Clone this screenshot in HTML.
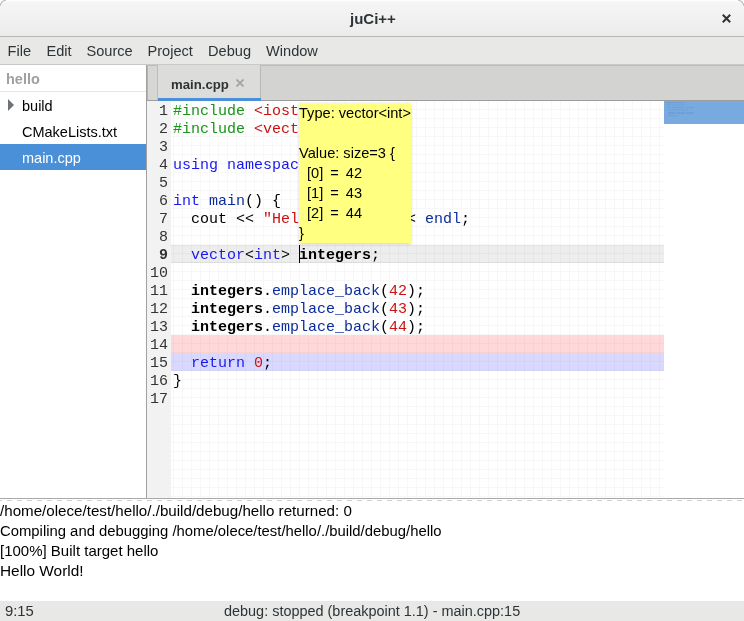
<!DOCTYPE html>
<html><head><meta charset="utf-8">
<style>
*{box-sizing:border-box;margin:0;padding:0}
html,body{width:744px;height:621px;overflow:hidden;will-change:transform;background:#fff;font-family:"Liberation Sans",sans-serif;color:#2e3436}
.abs{position:absolute}
#title{left:0;top:0;width:744px;height:37px;background:linear-gradient(#fdfdfd 0,#fdfdfd 1px,#f5f5f5 2px,#ececec);border-bottom:1px solid #b6b6b3}
#title .t{left:350px;top:10px;font-weight:bold;font-size:15px;color:#2e3436;white-space:pre}
#menu{left:0;top:37px;width:744px;height:28px;background:#e8e8e7;border-bottom:1px solid #c9c9c6}
#menu span{position:absolute;top:6px;font-size:14.6px;color:#2e3436;white-space:pre}
#side{left:0;top:65px;width:146px;height:433px;background:#fff}
#side .row{position:absolute;left:0;width:146px;height:26px;font-size:14.5px;white-space:pre}
#vsep{left:146px;top:65px;width:1px;height:433px;background:#a1a1a1}
#nbhead{left:147px;top:65px;width:597px;height:36px;background:#d3d3d1;border-bottom:1px solid #9d9d9b;border-top:1px solid #bdbdbb}
#nbleft{left:147px;top:66px;width:11px;height:34px;background:#d6d6d4;border-left:1px solid #b3b3b1;border-right:1px solid #bdbdbb}
#tab{left:158px;top:65px;width:103px;height:35px;background:#dcdcda;border-right:1px solid #b9b9b7}
#tabline{left:158px;top:98px;width:103px;height:3px;background:#4a90d9}
#editor{left:147px;top:101px;width:597px;height:397px;background:#fff}
#gutter{left:147px;top:101px;width:24px;height:397px;background:#f2f2f2}
#grid{left:171px;top:101px;width:493px;height:397px;
 background-image:linear-gradient(90deg,#f7f7f7 1px,transparent 1px),linear-gradient(#f7f7f7 1px,transparent 1px);
 background-size:9px 9px;background-position:2px 8px}
.code{font-family:"Liberation Mono",monospace;font-size:15px;line-height:18px;white-space:pre;color:#000}
#lnums{left:147px;top:103px;width:21px;text-align:right;color:#333}
#src{left:173px;top:103px}
.ln{height:18px}
.g{color:#189518}.r{color:#cc1010}.b{color:#1818ee}.bb{color:#0d2c9c}.k{color:#000}
#mini{left:664px;top:101px;width:80px;height:23px;background:#78aae0}
#tip{left:299px;top:103px;width:112px;height:140px;background:#ffff80;box-shadow:0 1px 3px rgba(0,0,0,0.18);font-size:14.6px;line-height:20px;color:#000;white-space:pre}
#tip .ti{padding-left:8px;word-spacing:3px}
#hsep{left:0;top:498px;width:744px;height:1px;background:#a8a8a8}
#dash{left:0;top:500px;width:744px;height:1px;background-image:linear-gradient(90deg,#d0d0d0 5px,transparent 5px);background-size:10px 1px;background-position:7px 0}
#term{left:0;top:501px;font-size:15px;line-height:20px;color:#000;white-space:pre}
#status{left:0;top:601px;width:744px;height:20px;background:#e8e8e7;font-size:14px;color:#2e3436;white-space:pre}
</style></head><body>
<div id="title" class="abs"><span class="t abs">juCi++</span>
<svg class="abs" style="left:721px;top:13px" width="11" height="11" viewBox="0 0 11 11"><path d="M1.8 1.8L9.2 9.2M9.2 1.8L1.8 9.2" stroke="#2e3436" stroke-width="2" stroke-linecap="butt"/></svg>
</div>
<div id="menu" class="abs">
<span style="left:7.5px">File</span><span style="left:46.5px">Edit</span><span style="left:86.5px">Source</span><span style="left:147.5px">Project</span><span style="left:208px">Debug</span><span style="left:266px">Window</span>
</div>
<div id="side" class="abs">
<div class="row" style="top:0;color:#a0a0a0;font-weight:bold"><span class="abs" style="left:6px;top:6px">hello</span></div>
<div class="abs" style="left:0;top:26px;width:146px;height:1px;background:#e6e6e6"></div>
<div class="row" style="top:27px;color:#000"><svg class="abs" style="left:8px;top:7px" width="6" height="12"><path d="M0 0L6 6L0 12Z" fill="#6e7378"/></svg><span class="abs" style="left:22px;top:6px">build</span></div>
<div class="row" style="top:53px;color:#000"><span class="abs" style="left:22px;top:6px">CMakeLists.txt</span></div>
<div class="row" style="top:79px;background:#4a90d9;color:#fff"><span class="abs" style="left:22px;top:6px">main.cpp</span></div>
</div>
<div id="vsep" class="abs"></div>
<div id="nbhead" class="abs"></div>
<div id="nbleft" class="abs"></div>
<div id="tab" class="abs"><span class="abs" style="left:13px;top:12px;font-weight:bold;font-size:13.2px;color:#2e3436">main.cpp</span><svg class="abs" style="left:78px;top:14px" width="8" height="8"><path d="M0.5 0.5L7.5 7.5M7.5 0.5L0.5 7.5" stroke="#a4a4a4" stroke-width="1.8"/></svg></div>
<div id="tabline" class="abs"></div>
<div id="editor" class="abs"></div>
<div id="gutter" class="abs"></div>
<div id="grid" class="abs"></div>
<div class="abs" style="left:171px;top:245px;width:493px;height:18px;background:rgba(0,0,0,0.07);box-shadow:inset 0 1px rgba(0,0,0,0.03),inset 0 -1px rgba(0,0,0,0.03)"></div>
<div class="abs" style="left:171px;top:335px;width:493px;height:18px;background:rgba(255,0,0,0.15)"></div>
<div class="abs" style="left:171px;top:353px;width:493px;height:18px;background:rgba(0,0,255,0.15)"></div>
<div id="lnums" class="abs code"><div class="ln">1</div><div class="ln">2</div><div class="ln">3</div><div class="ln">4</div><div class="ln">5</div><div class="ln">6</div><div class="ln">7</div><div class="ln">8</div><div class="ln" style="font-weight:bold">9</div><div class="ln">10</div><div class="ln">11</div><div class="ln">12</div><div class="ln">13</div><div class="ln">14</div><div class="ln">15</div><div class="ln">16</div><div class="ln">17</div></div>
<div id="src" class="abs code"><div class="ln"><span class="g">#include</span> <span class="r">&lt;iostream&gt;</span></div><div class="ln"><span class="g">#include</span> <span class="r">&lt;vector&gt;</span></div><div class="ln"></div><div class="ln"><span class="b">using namespace</span> <span class="k">std</span>;</div><div class="ln"></div><div class="ln"><span class="b">int</span> <span class="bb">main</span>() {</div><div class="ln">  cout &lt;&lt; <span class="r">"Hello World!"</span> &lt;&lt; <span class="bb">endl</span>;</div><div class="ln"></div><div class="ln">  <span class="b">vector</span>&lt;<span class="b">int</span>&gt; <b>integers</b>;</div><div class="ln"></div><div class="ln">  <b>integers</b>.<span class="bb">emplace_back</span>(<span class="r">42</span>);</div><div class="ln">  <b>integers</b>.<span class="bb">emplace_back</span>(<span class="r">43</span>);</div><div class="ln">  <b>integers</b>.<span class="bb">emplace_back</span>(<span class="r">44</span>);</div><div class="ln"></div><div class="ln">  <span class="b">return</span> <span class="r">0</span>;</div><div class="ln">}</div><div class="ln"></div></div>
<div class="abs" style="left:299px;top:245px;width:1px;height:18px;background:#000"></div>
<div id="mini" class="abs"><svg width="80" height="23" style="position:absolute;left:0;top:0"><g fill="#5f8fcf" opacity="0.4"><rect x="2" y="1" width="9" height="1.2"/><rect x="12" y="1" width="8" height="1.2"/><rect x="2" y="3.5" width="5" height="1"/><rect x="8" y="3.5" width="9" height="1"/><rect x="18" y="3.5" width="3" height="1"/><rect x="3" y="6" width="4" height="1"/><rect x="8" y="6" width="12" height="1"/><rect x="22" y="6" width="8" height="1"/><rect x="4" y="8.5" width="10" height="1"/><rect x="15" y="8.5" width="9" height="1"/><rect x="4" y="11" width="8" height="2"/><rect x="13" y="11" width="8" height="2"/><rect x="22" y="11" width="8" height="2"/><rect x="4" y="14" width="7" height="1"/><rect x="12" y="14" width="2" height="1"/><rect x="2" y="16" width="1" height="1"/></g></svg></div>
<div id="tip" class="abs"><div>Type: vector&lt;int&gt;</div><div>&nbsp;</div><div>Value: size=3 {</div><div class="ti">[0] = 42</div><div class="ti">[1] = 43</div><div class="ti">[2] = 44</div><div>}</div></div>
<div id="hsep" class="abs"></div>
<div id="dash" class="abs"></div>
<div id="term" class="abs"><div style="font-size:15.15px">/home/olece/test/hello/./build/debug/hello returned: 0</div><div style="font-size:14.85px">Compiling and debugging /home/olece/test/hello/./build/debug/hello</div><div>[100%] Built target hello</div><div style="font-size:15.4px">Hello World!</div></div>
<div id="status" class="abs"><span class="abs" style="left:5px;top:2px;font-size:14.8px">9:15</span><span class="abs" style="left:224px;top:2px;font-size:14.44px">debug: stopped (breakpoint 1.1) - main.cpp:15</span></div>
<svg class="abs" style="left:0;top:0" width="7" height="7"><path d="M0 0H5.5A5.5 5.5 0 0 0 0 5.5Z" fill="#fff"/><path d="M0.5 5.5A5 5 0 0 1 5.5 0.5" fill="none" stroke="#aaa" stroke-width="1"/></svg><svg class="abs" style="left:737px;top:0" width="7" height="7"><path d="M7 0H1.5A5.5 5.5 0 0 1 7 5.5Z" fill="#fff"/><path d="M1.5 0.5A5 5 0 0 1 6.5 5.5" fill="none" stroke="#aaa" stroke-width="1"/></svg>
</body></html>
